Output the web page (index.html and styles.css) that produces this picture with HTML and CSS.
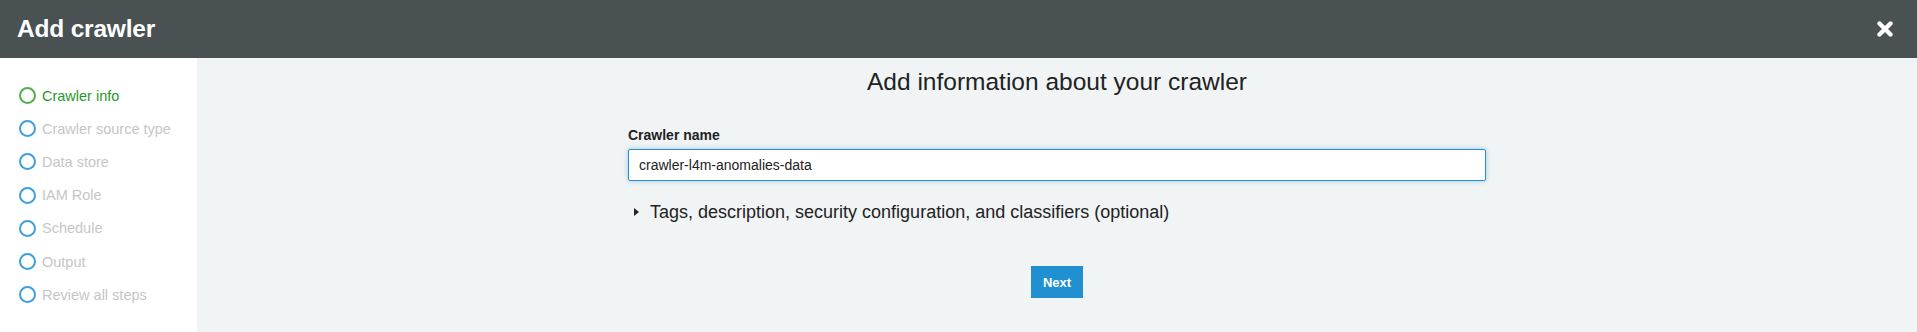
FILE: index.html
```html
<!DOCTYPE html>
<html lang="en">
<head>
    <meta charset="UTF-8">
    <title>Add crawler</title>
    <link rel="stylesheet" href="styles.css">
</head>
<body>
    <div class="topbar">
        <h1>Add crawler</h1>
        <button class="close-btn" aria-label="Close">
            <svg width="16" height="16" viewBox="0 0 16 16">
                <path d="M2.5 2.5 L13.5 13.5 M13.5 2.5 L2.5 13.5" stroke="#fff" stroke-width="4.4" stroke-linecap="round"/>
            </svg>
        </button>
    </div>

    <div class="layout">
        <ul class="steps">
            <li class="step active"><span class="dot"></span>Crawler info</li>
            <li class="step"><span class="dot"></span>Crawler source type</li>
            <li class="step"><span class="dot"></span>Data store</li>
            <li class="step"><span class="dot"></span>IAM Role</li>
            <li class="step"><span class="dot"></span>Schedule</li>
            <li class="step"><span class="dot"></span>Output</li>
            <li class="step"><span class="dot"></span>Review all steps</li>
        </ul>

        <div class="main">
            <h2>Add information about your crawler</h2>
            <div class="form">
                <label for="crawler-name">Crawler name</label>
                <input type="text" id="crawler-name" value="crawler-l4m-anomalies-data">
                <div class="expander"><span class="caret"></span>Tags, description, security configuration, and classifiers (optional)</div>
            </div>
            <button class="next-btn">Next</button>
        </div>
    </div>
</body>
</html>
```

FILE: styles.css
```css
:root {
    --header-bg: #4a5152;
    --main-bg: #f1f4f5;
    --green: #27992c;
    --blue: #2a8fd0;
    --muted: #c6c6c6;
    --text: #2a2a2a;
}
body {
    font-family: "Liberation Sans", Arial, sans-serif;
    margin: 0;
    padding: 0;
    height: 332px;
    display: flex;
    flex-direction: column;
    background: var(--main-bg);
    color: var(--text);
}
.topbar {
    height: 58px;
    flex-shrink: 0;
    background: var(--header-bg);
    display: flex;
    align-items: center;
    justify-content: space-between;
    padding: 0 24px 0 17px;
}
.topbar h1 {
    margin: 0;
    color: white;
    font-size: 24.5px;
    font-weight: bold;
    line-height: 28px;
    letter-spacing: -0.2px;
}
.close-btn {
    background: none;
    border: none;
    padding: 0;
    width: 16px;
    height: 16px;
    display: flex;
    cursor: pointer;
}
.layout {
    flex: 1;
    display: flex;
}
.steps {
    width: 197px;
    flex-shrink: 0;
    background: white;
    margin: 0;
    padding: 21px 0 0 19px;
    box-sizing: border-box;
    list-style: none;
}
.step {
    height: 33.2px;
    display: flex;
    align-items: center;
    font-size: 14.5px;
    color: var(--muted);
}
.dot {
    width: 13px;
    height: 13px;
    border: 2px solid #3d9fdf;
    border-radius: 50%;
    margin-right: 6px;
    flex-shrink: 0;
}
.step.active {
    color: var(--green);
}
.step.active .dot {
    border-color: #4fb04a;
}
.main {
    flex: 1;
    display: flex;
    flex-direction: column;
    align-items: center;
    padding-top: 10px;
}
.main h2 {
    margin: 0;
    font-size: 24.5px;
    line-height: 28px;
    font-weight: normal;
    color: #222;
}
.form {
    width: 858px;
    margin-top: 30px;
    display: flex;
    flex-direction: column;
}
label {
    font-size: 14px;
    font-weight: bold;
    line-height: 18px;
    color: #222;
}
input[type="text"] {
    margin-top: 5px;
    height: 32px;
    box-sizing: border-box;
    border: 1px solid var(--blue);
    border-radius: 2px;
    box-shadow: 0 0 5px rgba(42, 143, 208, 0.45);
    padding: 0 10px;
    font-family: "Liberation Sans", Arial, sans-serif;
    font-size: 14px;
    color: #222;
    background: white;
    outline: none;
}
.expander {
    margin-top: 20px;
    display: flex;
    align-items: center;
    font-size: 18px;
    line-height: 22px;
    color: #222;
}
.caret {
    width: 0;
    height: 0;
    border-top: 4px solid transparent;
    border-bottom: 4px solid transparent;
    border-left: 5px solid #222;
    margin: 0 11px 0 6px;
}
.next-btn {
    margin-top: 43px;
    height: 32px;
    padding: 0 12px;
    border: none;
    border-radius: 0;
    background: #2190d0;
    color: white;
    font-family: "Liberation Sans", Arial, sans-serif;
    font-size: 13px;
    font-weight: bold;
    cursor: pointer;
}
```
